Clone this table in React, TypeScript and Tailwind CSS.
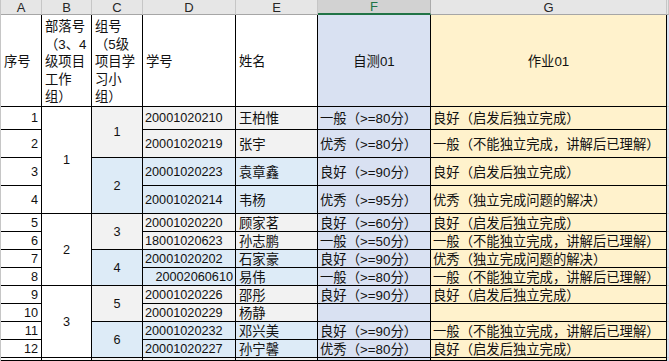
import clsx from "clsx";

type Row = {
  n: number;
  id: string;
  name: string;
  test: string;
  work: string;
  idRight?: boolean;
};

const rows: Row[] = [
  { n: 1, id: "20001020210", name: "王柏惟", test: "一般（>=80分）", work: "良好（启发后独立完成）" },
  { n: 2, id: "20001020219", name: "张宇", test: "优秀（>=80分）", work: "一般（不能独立完成，讲解后已理解）" },
  { n: 3, id: "20001020223", name: "袁章鑫", test: "良好（>=90分）", work: "良好（启发后独立完成）" },
  { n: 4, id: "20001020214", name: "韦杨", test: "优秀（>=95分）", work: "优秀（独立完成问题的解决）" },
  { n: 5, id: "20001020220", name: "顾家茗", test: "良好（>=60分）", work: "良好（启发后独立完成）" },
  { n: 6, id: "18001020623", name: "孙志鹏", test: "一般（>=50分）", work: "一般（不能独立完成，讲解后已理解）" },
  { n: 7, id: "20001020202", name: "石家豪", test: "良好（>=90分）", work: "优秀（独立完成问题的解决）" },
  { n: 8, id: "20002060610", name: "易伟", test: "一般（>=80分）", work: "一般（不能独立完成，讲解后已理解）", idRight: true },
  { n: 9, id: "20001020226", name: "邵彤", test: "良好（>=90分）", work: "良好（启发后独立完成）" },
  { n: 10, id: "20001020229", name: "杨静", test: "", work: "" },
  { n: 11, id: "20001020232", name: "邓兴美", test: "良好（>=90分）", work: "一般（不能独立完成，讲解后已理解）" },
  { n: 12, id: "20001020227", name: "孙宁馨", test: "优秀（>=80分）", work: "良好（启发后独立完成）" },
];

const Cell = ({
  className,
  children,
}: {
  className?: string;
  children?: React.ReactNode;
}) => (
  <div
    className={clsx(
      "flex items-center overflow-hidden whitespace-nowrap border-r border-b border-black px-[2px] pt-[2px]",
      className
    )}
  >
    {children}
  </div>
);

// header cell whose text wraps over several lines
const WrapCell = ({ children }: { children: React.ReactNode }) => (
  <div className="flex items-center overflow-hidden border-r border-b border-black px-[3px] pt-[3px]">
    <p className="w-full whitespace-normal leading-[17.5px]">{children}</p>
  </div>
);

const ColHead = ({ letter, active }: { letter: string; active?: boolean }) => (
  <div
    className={clsx(
      "flex items-center justify-center border-r text-[13px] leading-none",
      active
        ? "bg-[#d2d2d2] border-[#ababab] border-b-2 border-b-[#217346] text-[#217346]"
        : "bg-[#e6e6e6] border-[#c6c6c6] border-b border-b-[#a6a6a6] text-[#262626]"
    )}
  >
    {letter}
  </div>
);

export default function App() {
  return (
    <div
      className="h-[361px] w-[669px] overflow-hidden border-l border-[#c6c6c6] bg-white text-[13.33px] text-[#111]"
      style={{ fontFamily: '"Liberation Sans", "Noto Sans CJK SC", sans-serif' }}
    >
      <div className="grid h-full grid-cols-[41px_50px_51px_93px_82px_113px_236px_1fr] grid-rows-[15px_92px_23px_28px_28px_28px_repeat(8,18px)_1fr]">
        {/* column letters */}
        {["A", "B", "C", "D", "E", "F", "G", ""].map((l) => (
          <ColHead key={l || "H"} letter={l} active={l === "F"} />
        ))}

        {/* header row */}
        <Cell className="px-[3px]">序号</Cell>
        <WrapCell>部落号（3、4级项目工作组）</WrapCell>
        <WrapCell>组号（5级项目学习小组）</WrapCell>
        <Cell className="px-[3px]">学号</Cell>
        <Cell className="px-[3px]">姓名</Cell>
        <Cell className="justify-center bg-[#d9e1f2]">自测01</Cell>
        <Cell className="justify-center bg-[#fff2cc]">作业01</Cell>
        <div className="border-b border-[#d0d0d0] bg-[#d9e1f2]" />

        {rows.map((r) => {
          const fill = Math.floor((r.n - 1) / 2) % 2 === 0 ? "bg-[#f2f2f2]" : "bg-[#ddebf7]";
          return [
            <Cell key={`a${r.n}`} className="justify-end px-[3px] text-[12.7px]">
              {r.n}
            </Cell>,
            (r.n - 1) % 4 === 0 && (
              <Cell key={`b${r.n}`} className="row-span-4 justify-center text-[12.7px]">
                {(r.n - 1) / 4 + 1}
              </Cell>
            ),
            (r.n - 1) % 2 === 0 && (
              <Cell key={`c${r.n}`} className={clsx("row-span-2 justify-center text-[12.7px]", fill)}>
                {(r.n - 1) / 2 + 1}
              </Cell>
            ),
            <Cell
              key={`d${r.n}`}
              className={clsx("text-[12.7px]", fill, r.idRight ? "justify-end" : "justify-start")}
            >
              {r.id}
            </Cell>,
            <Cell key={`e${r.n}`} className={clsx("px-[3px]", fill)}>
              {r.name}
            </Cell>,
            <Cell key={`f${r.n}`} className="bg-[#d9e1f2]">
              {r.test}
            </Cell>,
            <Cell key={`g${r.n}`} className="bg-[#fff2cc]">
              {r.work}
            </Cell>,
            <div key={`h${r.n}`} className="border-b border-[#d0d0d0] bg-[#d9e1f2]" />,
          ];
        })}

        {/* partial row at bottom */}
        <Cell />
        <Cell />
        <Cell className="bg-[#f2f2f2]" />
        <Cell className="bg-[#f2f2f2]" />
        <Cell className="bg-[#f2f2f2]" />
        <Cell className="bg-[#d9e1f2]" />
        <Cell className="bg-[#fff2cc]" />
        <div className="bg-[#d9e1f2]" />
      </div>
    </div>
  );
}
